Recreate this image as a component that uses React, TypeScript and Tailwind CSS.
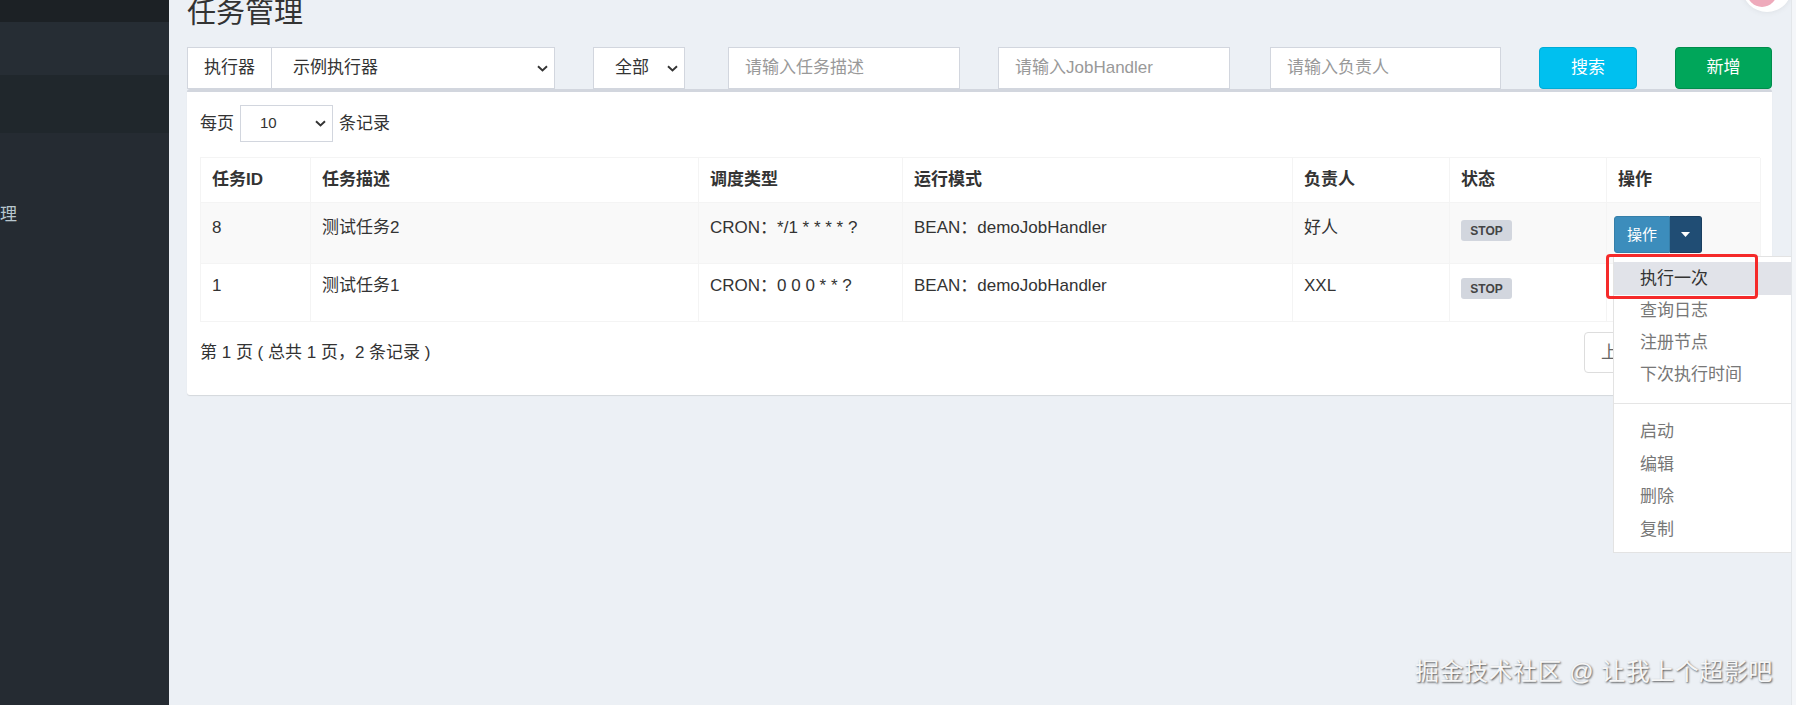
import React from "react";

const Chevron = () => (
  <svg width="11" height="7" viewBox="0 0 11 7" fill="none">
    <path d="M1 1.2 L5.5 5.5 L10 1.2" stroke="#333" strokeWidth="1.9" />
  </svg>
);

const cols = "grid grid-cols-[110px_388px_204px_390px_157px_157px_154px]";

const rows = [
  { id: "8", desc: "测试任务2", cron: "CRON：*/1 * * * * ?", mode: "BEAN：demoJobHandler", owner: "好人", bg: "bg-[#f9f9f9]", h: "h-[61px]", pt: "pt-[13px]", bpt: "pt-[17px]" },
  { id: "1", desc: "测试任务1", cron: "CRON：0 0 0 * * ?", mode: "BEAN：demoJobHandler", owner: "XXL", bg: "bg-white", h: "h-[58px]", pt: "pt-[10px]", bpt: "pt-[14px]" },
];

function OpButton() {
  return (
    <div className="flex h-[37px] w-[88px]">
      <div className="flex w-[56px] items-center justify-center rounded-l-[3px] border border-[#367fa9] bg-[#3c8dbc] text-[15px] text-white">
        操作
      </div>
      <div className="flex w-[32px] items-center justify-center rounded-r-[3px] border border-l-0 border-[#1a3f60] bg-[#204d74]">
        <svg width="9" height="5" viewBox="0 0 9 5">
          <path d="M0 0 H9 L4.5 5 Z" fill="#fff" />
        </svg>
      </div>
    </div>
  );
}

function Sidebar() {
  return (
    <aside className="flex w-[169px] shrink-0 flex-col bg-[#252b32]">
      <div className="h-[22px] bg-[#1c2125]" />
      <div className="h-[53px] bg-[#262d34]" />
      <div className="h-[58px] bg-[#20272c]" />
      <div className="h-[60px]" />
      <div className="h-[44px] text-[17px] leading-[44px] text-[#b8c7ce]">理</div>
    </aside>
  );
}

function FilterRow() {
  return (
    <div className="flex h-[42px] text-[17px]">
      <div className="flex w-[368px] border border-[#d2d6de] bg-white">
        <div className="flex w-[84px] items-center border-r border-[#d2d6de] pl-[16px]">执行器</div>
        <div className="flex flex-1 items-center justify-between pl-[21px] pr-[6px]">
          <span>示例执行器</span>
          <Chevron />
        </div>
      </div>
      <div className="ml-[38px] flex w-[92px] items-center justify-between border border-[#d2d6de] bg-white pl-[21px] pr-[6px]">
        <span>全部</span>
        <Chevron />
      </div>
      <div className="ml-[43px] flex w-[232px] items-center border border-[#d2d6de] bg-white pl-[16px] text-[#999]">请输入任务描述</div>
      <div className="ml-[38px] flex w-[232px] items-center border border-[#d2d6de] bg-white pl-[16px] text-[#999]">请输入JobHandler</div>
      <div className="ml-[40px] flex w-[231px] items-center border border-[#d2d6de] bg-white pl-[16px] text-[#999]">请输入负责人</div>
      <div className="ml-[38px] flex w-[98px] items-center justify-center rounded-[4px] border border-[#00acd6] bg-[#00c0ef] text-white">搜索</div>
      <div className="ml-[38px] flex w-[97px] items-center justify-center rounded-[4px] border border-[#008d4c] bg-[#00a65a] text-white">新增</div>
    </div>
  );
}

function JobTable() {
  const cell = "border-r border-b border-[#f4f4f4] pl-[11px]";
  return (
    <div className="mt-[15px] w-[1560px] border-l border-t border-[#f4f4f4] text-[17px]">
      <div className={`${cols} h-[45px] font-bold`}>
        {["任务ID", "任务描述", "调度类型", "运行模式", "负责人", "状态", "操作"].map((h) => (
          <div key={h} className={`${cell} flex items-center`}>{h}</div>
        ))}
      </div>
      {rows.map((r) => (
        <div key={r.id} className={`${cols} ${r.h} ${r.bg} leading-[24px]`}>
          <div className={`${cell} ${r.pt}`}>{r.id}</div>
          <div className={`${cell} ${r.pt}`}>{r.desc}</div>
          <div className={`${cell} ${r.pt}`}>{r.cron}</div>
          <div className={`${cell} ${r.pt}`}>{r.mode}</div>
          <div className={`${cell} ${r.pt}`}>{r.owner}</div>
          <div className={`${cell} ${r.bpt}`}>
            <span className="flex h-[21px] w-[51px] items-center justify-center rounded-[3px] bg-[#d2d6de] text-[12px] font-bold leading-none text-[#444]">STOP</span>
          </div>
          <div className="border-r border-b border-[#f4f4f4] pl-[7px] pt-[13px]">
            <OpButton />
          </div>
        </div>
      ))}
    </div>
  );
}

function Box() {
  return (
    <div className="h-[306px] w-[1585px] rounded-[3px] border-t-[3px] border-[#d2d6de] bg-white pl-[13px] pr-[12px] pt-[13px] shadow-[0_1px_1px_rgba(0,0,0,0.1)]">
      <div className="flex h-[37px] items-center text-[17px]">
        <span>每页</span>
        <div className="ml-[6px] flex h-[37px] w-[93px] items-center justify-between border border-[#d2d6de] pl-[19px] pr-[6px] text-[15px]">
          <span>10</span>
          <Chevron />
        </div>
        <span className="ml-[6px]">条记录</span>
      </div>
      <JobTable />
      <div className="mt-[10px] flex h-[41px] w-[1560px] items-center text-[17px]">
        <span>第 1 页 ( 总共 1 页，2 条记录 )</span>
        <div className="ml-auto mr-[41px] flex h-[41px]">
          <div className="flex items-center rounded-l-[4px] border border-[#ddd] px-[16px] text-[#666]">上页</div>
          <div className="flex items-center rounded-r-[4px] border border-l-0 border-[#ddd] px-[16px] text-[#666]">下页</div>
        </div>
      </div>
    </div>
  );
}

function Menu() {
  const item = "h-[32px] pl-[26px] leading-[32px] text-[#777]";
  const item2 = "h-[32.5px] pl-[26px] leading-[32.5px] text-[#777]";
  return (
    <div className="absolute left-[1613px] top-[256px] w-[200px] border border-[#e3e3e3] bg-white pb-[6px] pt-[5px] text-[17px]">
      <div className="h-[33px] bg-[#e1e3e9] pl-[26px] leading-[33px] text-[#333]">执行一次</div>
      <div className={item}>查询日志</div>
      <div className={item}>注册节点</div>
      <div className={item}>下次执行时间</div>
      <div className="mb-[12px] mt-[12px] h-px bg-[#e5e5e5]" />
      <div className={item2}>启动</div>
      <div className={item2}>编辑</div>
      <div className={item2}>删除</div>
      <div className={item2}>复制</div>
    </div>
  );
}

export default function App() {
  return (
    <div className="relative flex h-[705px] w-[1796px] overflow-hidden bg-[#ecf0f5] font-['Liberation_Sans','Noto_Sans_CJK_SC',sans-serif] text-[#333]">
      <Sidebar />
      <main className="flex-1 pl-[18px]">
        <h1 className="h-[47px] text-[29px] font-normal leading-[27px] text-[#333]">任务管理</h1>
        <FilterRow />
        <Box />
      </main>

      <Menu />
      <div className="absolute left-[1606px] top-[254px] h-[45px] w-[152px] rounded-[4px] border-[3px] border-[#f52a2a]" />

      <div className="absolute left-[1742px] top-[-38px] h-[50px] w-[50px] rounded-full bg-white shadow-[0_0_6px_rgba(0,0,0,0.08)]" />
      <div className="absolute left-[1747px] top-[-23px] h-[30px] w-[30px] rounded-full bg-[#eeaabb]" />
      <div className="absolute right-0 top-0 h-full w-[5px] border-l border-[#e3e6ea] bg-[#f4f6f9]" />

      <div className="absolute left-[1415px] top-[658px] text-[24px] leading-[28px] tracking-[0.5px] text-[#f6f6f6] [text-shadow:1px_1px_2px_rgba(0,0,0,0.65)]">
        掘金技术社区 @ 让我上个超影吧
      </div>
    </div>
  );
}
